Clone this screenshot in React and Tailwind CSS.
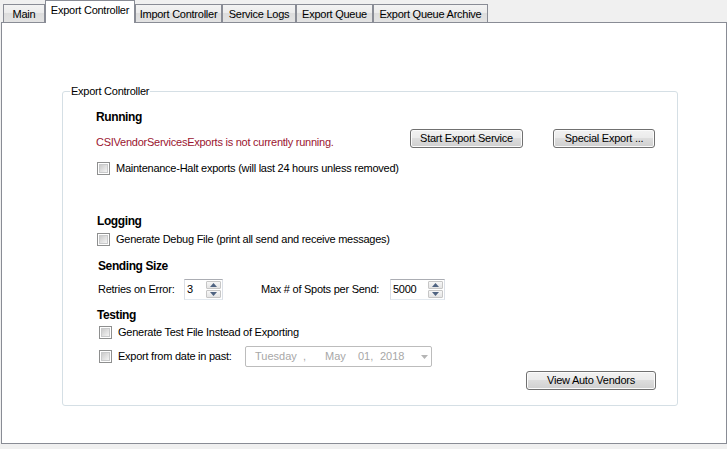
import React from "react";

const Btn = ({ w, children }) => (
  <div
    className={`${w} h-[19px] shrink-0 border border-[#707070] rounded-[3px] bg-[linear-gradient(to_bottom,#f2f2f2,#ebebeb_45%,#dddddd_50%,#cfcfcf)] shadow-[inset_0_0_0_1px_#fbfbfb] flex items-center justify-center text-black leading-none`}
  >
    {children}
  </div>
);

const Check = ({ className = "" }) => (
  <span className={`w-[13px] h-[13px] shrink-0 border border-[#8e8f8f] bg-white p-[1px] flex ${className}`}>
    <span className="flex-1 border border-[#c9cacb] bg-[linear-gradient(135deg,#cbcbcb,#f4f4f4)]" />
  </span>
);

const Tri = ({ up }) => (
  <svg width="7" height="4" viewBox="0 0 7 4">
    {up ? <path d="M0 4 L3.5 0 L7 4 Z" fill="#4f6381" /> : <path d="M0 0 L3.5 4 L7 0 Z" fill="#4f6381" />}
  </svg>
);

const Spin = ({ w, value }) => (
  <div className={`${w} h-[21px] shrink-0 border border-[#abadb3] border-x-[#dbdfe6] border-b-[#e3e9ef] bg-white flex items-center`}>
    <span className="flex-1 pl-[2px] leading-none">{value}</span>
    <div className="w-[15px] h-[17px] mr-[1px] flex flex-col gap-[1px]">
      <div className="flex-1 border border-[#c6c6c6] rounded-[1px] bg-[linear-gradient(to_bottom,#f7f7f7,#e4e4e4)] flex items-center justify-center">
        <Tri up />
      </div>
      <div className="flex-1 border border-[#c6c6c6] rounded-[1px] bg-[linear-gradient(to_bottom,#f7f7f7,#e4e4e4)] flex items-center justify-center">
        <Tri />
      </div>
    </div>
  </div>
);

const Tab = ({ w, children, selected }) =>
  selected ? (
    <div className={`${w} h-[23px] -mb-[1px] mt-0 border border-b-0 border-[#898c95] bg-white flex items-start justify-center pt-[3px] relative z-10`}>
      {children}
    </div>
  ) : (
    <div className={`${w} h-[18px] border border-b-0 border-[#898c95] bg-[linear-gradient(to_bottom,#f3f3f3,#ebebeb_50%,#dddddd_50%,#e3e3e3)] flex items-center justify-center pt-[1px]`}>
      {children}
    </div>
  );

export default function App() {
  return (
    <div className="w-[727px] h-[449px] bg-[#f0f0f0] overflow-hidden font-['Liberation_Sans',Arial,sans-serif] text-[11px] tracking-[-0.25px] text-black leading-[13px]">
      <div className="flex items-end h-[22px] pl-[3px] relative z-10">
        <Tab w="w-[42px]">Main</Tab>
        <Tab w="w-[90px]" selected>Export Controller</Tab>
        <Tab w="w-[87px]">Import Controller</Tab>
        <Tab w="w-[74px]">Service Logs</Tab>
        <Tab w="w-[77px]">Export Queue</Tab>
        <Tab w="w-[115px]">Export Queue Archive</Tab>
      </div>
      <div className="ml-[1px] w-[726px] h-[422px] border border-[#898c95] bg-white pt-[68px] pl-[60px]">
        <div className="relative w-[616px] h-[315px] border border-[#d5dfe5] rounded-[3px] pl-[33px] flex flex-col">
          <span className="absolute left-[7px] -top-[7px] px-[1px] bg-white">Export Controller</span>

          <div className="mt-[18px] h-[14px] flex items-center font-bold text-[12px] tracking-[-0.4px]">Running</div>

          <div className="mt-[5px] h-[19px] flex items-start">
            <span className="w-[314px] pt-[7px] text-[#9b1530]">CSIVendorServicesExports is not currently running.</span>
            <Btn w="w-[113px]">Start Export Service</Btn>
            <div className="w-[30px]" />
            <Btn w="w-[102px]">Special Export ...</Btn>
          </div>

          <div className="mt-[13px] h-[14px] flex items-center">
            <Check className="ml-[1px]" />
            <span className="ml-[6px]">Maintenance-Halt exports (will last 24 hours unless removed)</span>
          </div>

          <div className="mt-[39px] h-[14px] flex items-center font-bold text-[12px] tracking-[-0.4px] pl-[1px]">Logging</div>

          <div className="mt-[4px] h-[14px] flex items-center">
            <Check className="ml-[1px]" />
            <span className="ml-[6px]">Generate Debug File (print all send and receive messages)</span>
          </div>

          <div className="mt-[13px] h-[14px] flex items-center font-bold text-[12px] tracking-[-0.4px] pl-[2px]">Sending Size</div>

          <div className="mt-[6px] h-[21px] flex items-center">
            <span className="w-[86px] ml-[2px]">Retries on Error:</span>
            <Spin w="w-[39px]" value="3" />
            <span className="w-[129px] ml-[38px]">Max # of Spots per Send:</span>
            <Spin w="w-[55px]" value="5000" />
          </div>

          <div className="mt-[8px] h-[14px] flex items-center font-bold text-[12px] tracking-[-0.4px] pl-[1px]">Testing</div>

          <div className="mt-[3px] h-[14px] flex items-center">
            <Check className="ml-[3px]" />
            <span className="ml-[6px]">Generate Test File Instead of Exporting</span>
          </div>

          <div className="mt-[7px] h-[21px] flex items-center">
            <Check className="ml-[3px]" />
            <span className="ml-[6px] w-[127px]">Export from date in past:</span>
            <div className="w-[187px] h-[21px] border border-[#bcbcbc] rounded-[2px] flex items-center pl-[9px] text-[#a7a7a7] tracking-normal">
              <span className="w-[48px]">Tuesday</span>
              <span className="w-[22px]">,</span>
              <span className="w-[33px]">May</span>
              <span className="w-[22px]">01,</span>
              <span>2018</span>
              <svg className="ml-auto mr-[3px]" width="7" height="4" viewBox="0 0 7 4">
                <path d="M0 0 L3.5 4 L7 0 Z" fill="#b5b5b5" />
              </svg>
            </div>
          </div>

          <div className="mt-[4px] h-[19px] flex">
            <div className="ml-[430px]">
              <Btn w="w-[130px]">View Auto Vendors</Btn>
            </div>
          </div>
        </div>
      </div>
    </div>
  );
}
